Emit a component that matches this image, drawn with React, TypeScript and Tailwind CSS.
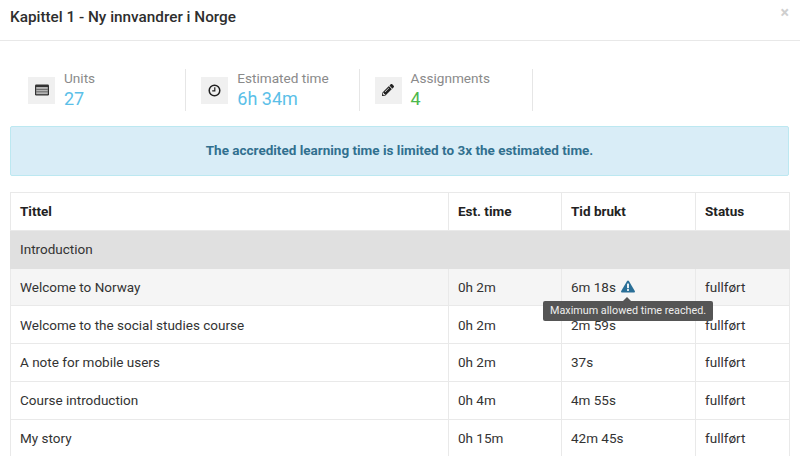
import React from "react";
import { FaPencilAlt } from "react-icons/fa";

const rows = [
  { title: "Welcome to Norway", est: "0h 2m", spent: "6m 18s", warn: true },
  { title: "Welcome to the social studies course", est: "0h 2m", spent: "2m 59s" },
  { title: "A note for mobile users", est: "0h 2m", spent: "37s" },
  { title: "Course introduction", est: "0h 4m", spent: "4m 55s" },
  { title: "My story", est: "0h 15m", spent: "42m 45s" },
];

const cell = "border border-[#e9e9e9] px-[9px] h-[37.75px] text-left align-middle";

const UnitsIcon = () => (
  <svg width="14" height="12" viewBox="0 0 14 12">
    <rect x="0" y="0.5" width="14" height="11" rx="1.2" fill="#333" />
    <rect x="1.2" y="3" width="11.6" height="7.2" fill="#b5b5b5" />
    <path d="M1.2 5.4h11.6M1.2 7.8h11.6" stroke="#555" strokeWidth="0.8" />
  </svg>
);

const ClockIcon = () => (
  <svg width="13" height="13" viewBox="0 0 13 13" fill="none" stroke="#222">
    <circle cx="6.5" cy="6.5" r="5.3" strokeWidth="1.5" />
    <path d="M6.8 3.2v3.6H4.2" strokeWidth="1.2" />
  </svg>
);

const WarnIcon = () => (
  <svg width="14" height="13" viewBox="0 0 14 13">
    <path d="M7 0.4c.4 0 .7.2.9.5l5.9 10.2c.4.7-.1 1.5-.9 1.5H1.1c-.8 0-1.3-.8-.9-1.5L6.1.9C6.3.6 6.6.4 7 .4z" fill="#2a6f97" />
    <rect x="6.1" y="3.6" width="1.8" height="4.6" fill="#fff" />
    <rect x="6.1" y="9.1" width="1.8" height="1.8" fill="#fff" />
  </svg>
);

const Stat = ({
  icon,
  label,
  value,
  color,
}: {
  icon: React.ReactNode;
  label: string;
  value: string;
  color: string;
}) => (
  <div className="flex h-[42px] w-[173.3px] items-center border-r border-[#e6e6e6] pl-[15px]">
    <div className="flex h-[27px] w-[27px] items-center justify-center bg-[#f0f0f0]">
      {icon}
    </div>
    <div className="ml-[9px]">
      <div className="text-[13.6px] leading-[17px] text-[#8a8a8a]">{label}</div>
      <div className={`text-[18px] leading-[24px] ${color}`}>{value}</div>
    </div>
  </div>
);

export default function App() {
  return (
    <div className="h-[456px] w-[800px] overflow-hidden bg-white font-['Roboto',sans-serif] text-[13.5px] text-[#333]">
      <div className="relative h-[41px] border-b border-[#e8e8e8] pl-[10px] pt-[6px]">
        <h4 className="text-[15.3px] leading-[22px] font-medium text-[#2e2e2e]">
          Kapittel 1 - Ny innvandrer i Norge
        </h4>
        <span className="absolute right-[11px] top-[4px] text-[16px] leading-[18px] font-bold text-[#cfcfcf]">
          ×
        </span>
      </div>

      <div className="flex pl-[13px] pt-[28px]">
        <Stat icon={<UnitsIcon />} label="Units" value="27" color="text-[#5bbfe8]" />
        <Stat icon={<ClockIcon />} label="Estimated time" value="6h 34m" color="text-[#5bbfe8]" />
        <Stat
          icon={<FaPencilAlt size={12} color="#222" />}
          label="Assignments"
          value="4"
          color="text-[#4cb84c]"
        />
      </div>

      <div className="ml-[10px] mr-[11px] mt-[15px] flex h-[50px] items-center justify-center rounded-[2px] border border-[#bce8f1] bg-[#d9edf7] pb-[1px] font-bold text-[#31708f]">
        The accredited learning time is limited to 3x the estimated time.
      </div>

      <table className="ml-[10px] mt-[16px] w-[779px] table-fixed border-collapse">
        <colgroup>
          <col className="w-[438px]" />
          <col className="w-[113px]" />
          <col className="w-[134px]" />
          <col className="w-[94px]" />
        </colgroup>
        <thead>
          <tr>
            <th className={`${cell} font-bold text-[#222]`}>Tittel</th>
            <th className={`${cell} font-bold text-[#222]`}>Est. time</th>
            <th className={`${cell} font-bold text-[#222]`}>Tid brukt</th>
            <th className={`${cell} font-bold text-[#222]`}>Status</th>
          </tr>
        </thead>
        <tbody>
          <tr className="bg-[#e0e0e0]">
            <td colSpan={4} className="h-[37.75px] border border-[#e0e0e0] px-[9px]">
              Introduction
            </td>
          </tr>
          {rows.map((row, i) => (
            <tr key={row.title} className={i === 0 ? "bg-[#f5f5f5]" : ""}>
              <td className={cell}>{row.title}</td>
              <td className={cell}>{row.est}</td>
              <td className={`${cell} relative`}>
                <span className="inline-flex items-center gap-[5px]">
                  {row.spent}
                  {row.warn && <WarnIcon />}
                </span>
                {row.warn && (
                  <div className="absolute left-[-19px] top-[32px] z-10 h-[20px] whitespace-nowrap rounded-[2px] bg-[#555] px-[7px] text-[10.8px] leading-[20px] text-[#eee]">
                    <span className="absolute left-[80px] top-[-4px] h-0 w-0 border-x-[4px] border-b-[4px] border-x-transparent border-b-[#555]" />
                    Maximum allowed time reached.
                  </div>
                )}
              </td>
              <td className={cell}>fullført</td>
            </tr>
          ))}
        </tbody>
      </table>
    </div>
  );
}
